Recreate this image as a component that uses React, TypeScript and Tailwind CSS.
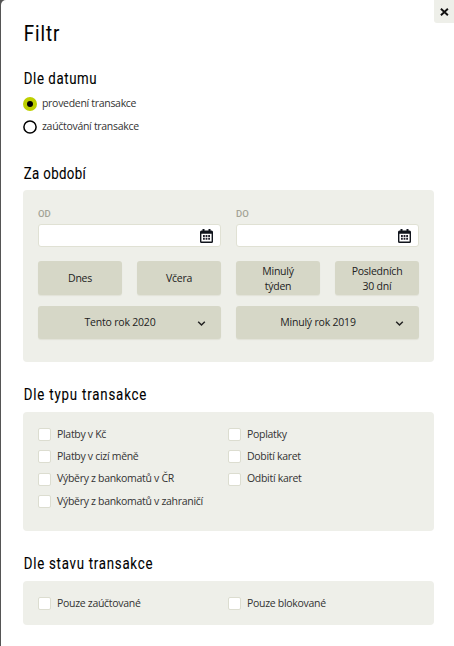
import type { ReactNode } from 'react';

function Heading({ children, className = '' }: { children: string; className?: string }) {
  return (
    <h2 className={`h-6 origin-left scale-x-[0.78] whitespace-nowrap pl-px font-[Roboto,sans-serif] text-[17px] text-black [-webkit-text-stroke:0.1px_#000] ${className}`}>
      {children}
    </h2>
  );
}

function Panel({ children, className = '' }: { children: ReactNode; className?: string }) {
  return <div className={`w-[411px] rounded-[4px] bg-[#eeefe9] px-[15px] ${className}`}>{children}</div>;
}

function CalendarIcon() {
  return (
    <svg width="13" height="14" viewBox="0 0 13 14" className="shrink-0">
      <path d="M2.500 0h2v1.500h4V0h2v1.500h1A1.500 1.500 0 0 1 13 3v9.500a1.500 1.500 0 0 1-1.500 1.500h-10A1.500 1.500 0 0 1 0 12.500V3a1.500 1.500 0 0 1 1.500-1.500h1zM1.400 4.700v7.900h10.200V4.700z" fill="#10141c" fillRule="evenodd" />
      <path d="M3 6h1.800v2H3zM5.600 6h1.800v2H5.600zM8.200 6H10v2H8.200zM3 8.700h1.800v2H3zM5.600 8.700h1.800v2H5.600zM8.200 8.700H10v2H8.200z" fill="#20202c" />
    </svg>
  );
}

function DateField({ label }: { label: string }) {
  return (
    <label className="block">
      <span className="block h-[15px] font-[Roboto,sans-serif] text-[9.5px] font-medium leading-[15px] text-[#a3a396]">{label}</span>
      <span className="mt-[3px] flex h-[23px] items-center justify-end rounded-[3px] border border-[#e0e1d4] bg-white pr-[7px]">
        <CalendarIcon />
      </span>
    </label>
  );
}

function PeriodButton({ children }: { children: ReactNode }) {
  return (
    <button className="flex h-[34px] items-center justify-center rounded-[3px] bg-[#d6d7c7] pt-px text-center text-[10.5px] leading-[15px] tracking-[-0.25px] text-[#222] shadow-[0_1px_1px_#e1e2d7]">
      {children}
    </button>
  );
}

function YearButton({ children }: { children: string }) {
  return (
    <button className="flex h-[33px] items-center rounded-[3px] bg-[#d6d7c7] pr-[15px] pt-px text-[10.5px] tracking-[-0.2px] text-[#222] shadow-[0_1px_1px_#e1e2d7]">
      <span className="flex-1 pl-[5px] text-center">{children}</span>
      <svg width="9" height="7" viewBox="0 0 9 7" fill="none" stroke="#222" strokeWidth="1.500">
        <path d="M1.200 1.800 4.500 5l3.300-3.200" />
      </svg>
    </button>
  );
}

function Check({ children }: { children: string }) {
  return (
    <label className="flex h-[22.25px] items-center gap-[6px] whitespace-nowrap text-[10.5px] tracking-[-0.3px] text-[#333]">
      <span className="h-[13px] w-[13px] shrink-0 rounded-[2px] border border-[#dcddd0] bg-white" />
      <span>{children}</span>
    </label>
  );
}

export default function App() {
  return (
    <div className="h-[646px] w-[454px] overflow-hidden bg-[#555]">
      <main className="relative ml-px h-full rounded-tl-[5px] bg-white pl-[22px] font-['Open_Sans',sans-serif]">
        <button aria-label="Zavřít" className="absolute right-0 top-0 flex h-[23px] w-[20px] items-center justify-center rounded-bl-[3px] bg-[#eeefe9] pl-px">
          <svg width="9" height="8" viewBox="0 0 9 8" fill="none" stroke="#111" strokeWidth="1.900">
            <path d="m.9.7 7 6.600M7.900.7.9 7.300" />
          </svg>
        </button>
        <h1 className="h-[67px] origin-left scale-x-[0.83] pl-px pt-[18px] font-[Roboto,sans-serif] text-[22.5px] leading-[31px] tracking-[1.100px] text-black [-webkit-text-stroke:0.1px_#000]">Filtr</h1>
        <Heading className="leading-[23px] tracking-[0.75px]">Dle datumu</Heading>
        <label className="mt-[2px] flex h-[22px] items-center gap-[5px] text-[10.5px] tracking-[-0.3px] text-[#333]">
          <span className="flex h-[14px] w-[14px] items-center justify-center rounded-full bg-[#bed000]">
            <span className="h-[6px] w-[6px] rounded-full bg-black" />
          </span>
          provedení transakce
        </label>
        <label className="flex h-[23px] items-center gap-[5px] text-[10.5px] tracking-[-0.3px] text-[#333]">
          <svg width="14" height="14" viewBox="0 0 14 14" fill="white" stroke="black" strokeWidth="1.500">
            <circle cx="7" cy="7" r="6.100" />
          </svg>
          zaúčtování transakce
        </label>
        <Heading className="mt-[24px] leading-[23px] tracking-[0.45px]">Za období</Heading>
        <Panel className="mt-[4px] h-[172px] pt-[16px]">
          <div className="grid grid-cols-2 gap-x-[15px]">
            <DateField label="OD" />
            <DateField label="DO" />
          </div>
          <div className="mt-[14px] grid grid-cols-4 gap-x-[15px]">
            <PeriodButton>Dnes</PeriodButton>
            <PeriodButton>Včera</PeriodButton>
            <PeriodButton>Minulý<br />týden</PeriodButton>
            <PeriodButton>Posledních<br />30 dní</PeriodButton>
          </div>
          <div className="mt-[11px] grid grid-cols-2 gap-x-[15px]">
            <YearButton>Tento rok 2020</YearButton>
            <YearButton>Minulý rok 2019</YearButton>
          </div>
        </Panel>
        <Heading className="mt-[20px] leading-6 tracking-[1.050px]">Dle typu transakce</Heading>
        <Panel className="mt-[6px] flex h-[119px] pt-[11.5px]">
          <div className="w-[190px]">
            <Check>Platby v Kč</Check>
            <Check>Platby v cizí měně</Check>
            <Check>Výběry z bankomatů v ČR</Check>
            <Check>Výběry z bankomatů v zahraničí</Check>
          </div>
          <div>
            <Check>Poplatky</Check>
            <Check>Dobití karet</Check>
            <Check>Odbití karet</Check>
          </div>
        </Panel>
        <Heading className="mt-[20px] leading-6 tracking-[0.950px]">Dle stavu transakce</Heading>
        <Panel className="mt-[6px] flex h-[44px] pt-[11.5px]">
          <div className="w-[190px]"><Check>Pouze zaúčtované</Check></div>
          <Check>Pouze blokované</Check>
        </Panel>
      </main>
    </div>
  );
}
